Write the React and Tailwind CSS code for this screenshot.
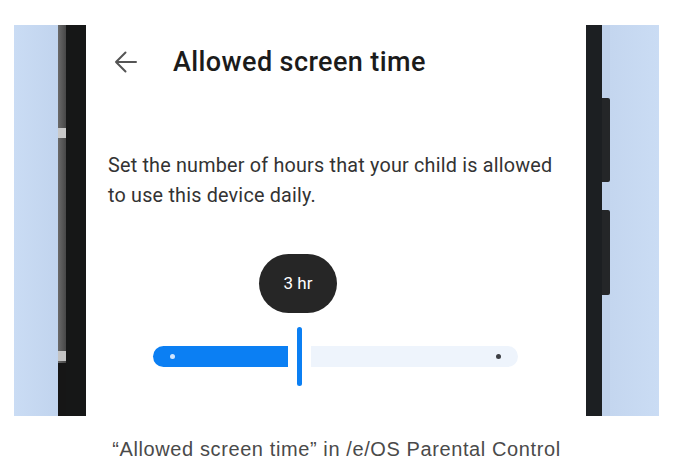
export default function App() {
  return (
    <div className="w-[690px] h-[470px] bg-white overflow-hidden">
      {/* Figure */}
      <div className="ml-[14px] mt-[25px] w-[645px] h-[391px] flex overflow-hidden">
        {/* left backdrop */}
        <div className="w-[44px] h-full bg-gradient-to-r from-[#cadcf4] to-[#c1d4ee]" />

        {/* left phone edge */}
        <div className="w-[28px] h-full flex">
          <div className="w-[8px] h-full flex flex-col">
            <div className="h-[338px] bg-gradient-to-r from-[#6a6a6a] to-[#474747] flex flex-col">
              <div className="h-[103px]" />
              <div className="h-[10px] bg-[#c9c9c9]" />
              <div className="h-[213px]" />
              <div className="h-[10px] bg-[#c4c4c4]" />
            </div>
            <div className="flex-1 bg-[#161616]" />
          </div>
          <div className="flex-1 h-full bg-[#161717]" />
        </div>

        {/* screen */}
        <div className="w-[500px] h-full bg-white flex flex-col font-['Roboto',sans-serif]">
          <div className="mt-[22px] h-[30px] flex items-center">
            <svg className="ml-[28px]" width="23" height="22" viewBox="0 0 23 22" fill="none">
              <path
                d="M22 11H2 M11.5 1.5 L2 11 L11.5 20.5"
                stroke="#555"
                strokeWidth="2"
                strokeLinecap="round"
                strokeLinejoin="round"
              />
            </svg>
            <h1 className="ml-[36px] text-[27px] leading-[30px] tracking-[0.4px] font-medium text-[#1b1b1b]">
              Allowed screen time
            </h1>
          </div>

          <p className="mt-[74px] ml-[22px] max-w-[455px] text-[19.8px] leading-[30px] tracking-[0.2px] text-[#333]">
            Set the number of hours that your child is allowed to use this device daily.
          </p>

          {/* slider */}
          <div className="mt-[43px] ml-[67px] w-[365px] flex flex-col">
            <div className="ml-[106px] w-[78px] h-[59px] rounded-[30px] bg-[#262626] flex items-center justify-center">
              <span className="text-white text-[17px]">3 hr</span>
            </div>
            <div className="mt-[14px] h-[59px] flex items-center gap-[9px]">
              <div className="w-[135px] h-[21px] bg-[#0b7ff3] rounded-l-full rounded-r-[3px] flex items-center">
                <div className="ml-[17px] w-[5px] h-[5px] rounded-full bg-[#cfe5ff]" />
              </div>
              <div className="w-[5px] h-[59px] rounded-full bg-[#0b7ff3]" />
              <div className="flex-1 h-[21px] bg-[#eef4fc] rounded-r-full rounded-l-[3px] flex items-center justify-end">
                <div className="mr-[17px] w-[5px] h-[5px] rounded-full bg-[#3d3f44]" />
              </div>
            </div>
          </div>
        </div>

        {/* right phone edge */}
        <div className="w-[16px] h-full bg-[#1c1f22]" />
        <div className="w-[8px] h-full bg-[#bfd1ea] flex flex-col">
          <div className="h-[73px]" />
          <div className="h-[84px] bg-[#242628] rounded-r-[2px]" />
          <div className="h-[28px]" />
          <div className="h-[85px] bg-[#242628] rounded-r-[2px]" />
        </div>

        {/* right backdrop */}
        <div className="flex-1 h-full bg-gradient-to-r from-[#c4d6ef] to-[#cadcf4]" />
      </div>

      {/* caption */}
      <p className="mt-[21px] w-[673px] text-center text-[20px] leading-[24px] tracking-[0.6px] text-[#4a4a4a] font-['Liberation_Sans',sans-serif]">
        “Allowed screen time” in /e/OS Parental Control
      </p>
    </div>
  );
}
